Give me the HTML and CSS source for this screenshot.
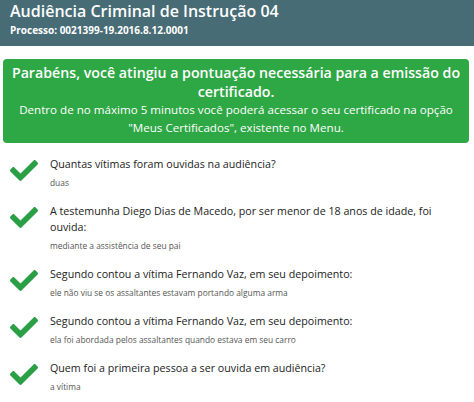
FILE: index.html
```html
<!DOCTYPE html>
<html lang="pt-BR">
<head>
    <meta charset="UTF-8">
    <meta name="viewport" content="width=device-width, initial-scale=1.0">
    <title>Resultado</title>
    <link rel="stylesheet" href="styles.css">
</head>
<body>
    <div class="header">
        <div class="title">Audiência Criminal de Instrução 04</div>
        <div class="process">Processo: 0021399-19.2016.8.12.0001</div>
    </div>

    <div class="content">
        <div class="success">
            <div class="success-title">Parabéns, você atingiu a pontuação necessária para a emissão do certificado.</div>
            <div class="success-text">Dentro de no máximo 5 minutos você poderá acessar o seu certificado na opção "Meus Certificados", existente no Menu.</div>
        </div>

        <ul class="answers">
            <li class="answer">
                <svg class="check" viewBox="0 64 512 384"><path d="M173.9 439.4l-166.4-166.4c-10-10-10-26.2 0-36.2l36.2-36.2c10-10 26.2-10 36.2 0L192 312.7 432.1 72.6c10-10 26.2-10 36.2 0l36.2 36.2c10 10 10 26.2 0 36.2l-294.4 294.4c-10 10-26.2 10-36.2 0z"/></svg>
                <div class="answer-body">
                    <div class="question">Quantas vítimas foram ouvidas na audiência?</div>
                    <div class="reply">duas</div>
                </div>
            </li>
            <li class="answer">
                <svg class="check" viewBox="0 64 512 384"><path d="M173.9 439.4l-166.4-166.4c-10-10-10-26.2 0-36.2l36.2-36.2c10-10 26.2-10 36.2 0L192 312.7 432.1 72.6c10-10 26.2-10 36.2 0l36.2 36.2c10 10 10 26.2 0 36.2l-294.4 294.4c-10 10-26.2 10-36.2 0z"/></svg>
                <div class="answer-body">
                    <div class="question">A testemunha Diego Dias de Macedo, por ser menor de 18 anos de idade, foi ouvida:</div>
                    <div class="reply">mediante a assistência de seu pai</div>
                </div>
            </li>
            <li class="answer">
                <svg class="check" viewBox="0 64 512 384"><path d="M173.9 439.4l-166.4-166.4c-10-10-10-26.2 0-36.2l36.2-36.2c10-10 26.2-10 36.2 0L192 312.7 432.1 72.6c10-10 26.2-10 36.2 0l36.2 36.2c10 10 10 26.2 0 36.2l-294.4 294.4c-10 10-26.2 10-36.2 0z"/></svg>
                <div class="answer-body">
                    <div class="question">Segundo contou a vítima Fernando Vaz, em seu depoimento:</div>
                    <div class="reply">ele não viu se os assaltantes estavam portando alguma arma</div>
                </div>
            </li>
            <li class="answer">
                <svg class="check" viewBox="0 64 512 384"><path d="M173.9 439.4l-166.4-166.4c-10-10-10-26.2 0-36.2l36.2-36.2c10-10 26.2-10 36.2 0L192 312.7 432.1 72.6c10-10 26.2-10 36.2 0l36.2 36.2c10 10 10 26.2 0 36.2l-294.4 294.4c-10 10-26.2 10-36.2 0z"/></svg>
                <div class="answer-body">
                    <div class="question">Segundo contou a vítima Fernando Vaz, em seu depoimento:</div>
                    <div class="reply">ela foi abordada pelos assaltantes quando estava em seu carro</div>
                </div>
            </li>
            <li class="answer">
                <svg class="check" viewBox="0 64 512 384"><path d="M173.9 439.4l-166.4-166.4c-10-10-10-26.2 0-36.2l36.2-36.2c10-10 26.2-10 36.2 0L192 312.7 432.1 72.6c10-10 26.2-10 36.2 0l36.2 36.2c10 10 10 26.2 0 36.2l-294.4 294.4c-10 10-26.2 10-36.2 0z"/></svg>
                <div class="answer-body">
                    <div class="question">Quem foi a primeira pessoa a ser ouvida em audiência?</div>
                    <div class="reply">a vítima</div>
                </div>
            </li>
        </ul>
    </div>
</body>
</html>
```

FILE: styles.css
```css
body {
    margin: 0;
    padding: 0;
    font-family: "Open Sans", "Noto Sans", sans-serif;
    background-color: #fff;
    color: #333;
}

.header {
    background-color: #476c76;
    color: #fff;
    height: 46px;
    padding: 1px 10px 0;
    box-sizing: border-box;
}

.title {
    font-size: 16px;
    line-height: 20px;
    font-weight: 600;
}

.process {
    font-size: 10px;
    line-height: 18px;
    font-weight: 700;
}

.content {
    padding: 13px 5px 0 3px;
}

.success {
    background-color: #2ea745;
    color: #fff;
    text-align: center;
    border-radius: 4px;
    padding: 4px 4px 6px;
}

.success-title {
    font-size: 14.2px;
    line-height: 19px;
    font-weight: 600;
}

.success-text {
    font-size: 11.6px;
    line-height: 18px;
}

.answers {
    list-style: none;
    margin: 0;
    padding: 13px 0 0 7px;
}

.answer {
    display: flex;
    align-items: flex-start;
    margin-bottom: 14px;
}

.check {
    width: 28px;
    height: 21px;
    fill: #2a9f45;
    flex-shrink: 0;
    margin-top: 4px;
    margin-right: 12px;
}

.answer-body {
    max-width: 395px;
}

.question {
    font-size: 10.7px;
    line-height: 16px;
    color: #222;
}

.reply {
    font-size: 8.4px;
    line-height: 12px;
    margin-top: 5px;
    color: #555;
}
```
